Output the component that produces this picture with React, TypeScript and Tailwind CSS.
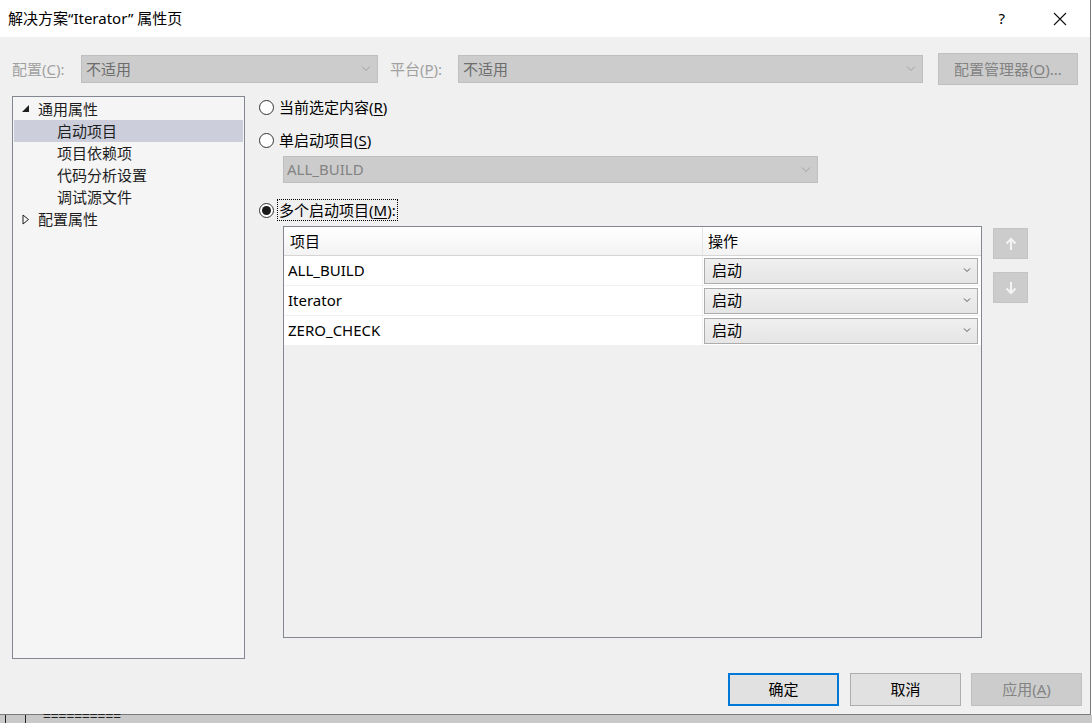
import React from "react";

const FONT = "font-['Segoe_UI','Noto_Sans','Noto_Sans_CJK_SC',sans-serif]";

function Chevron({ color = "#a0a0a0" }: { color?: string }) {
  return (
    <svg width="10" height="6" viewBox="0 0 10 6" fill="none" stroke={color} strokeWidth="1">
      <path d="M1 0.5l4 4 4-4" />
    </svg>
  );
}

function Radio({ checked, label, focus }: { checked?: boolean; label: React.ReactNode; focus?: boolean }) {
  return (
    <div className="flex items-center h-[22px]">
      <span className="w-[15px] h-[15px] rounded-full border border-[#333] bg-white flex items-center justify-center shrink-0">
        {checked && <span className="w-[9px] h-[9px] rounded-full bg-[#1a1a1a]" />}
      </span>
      <span
        className={`ml-[4px] text-[15px] text-black leading-[20px] px-[1px] ${focus ? "outline outline-1 outline-dotted outline-black" : ""}`}
      >
        {label}
      </span>
    </div>
  );
}

function U({ c }: { c: string }) {
  return <span className="underline underline-offset-2">{c}</span>;
}

const treeItems = [
  { text: "通用属性", level: 0, open: true },
  { text: "启动项目", level: 1, selected: true },
  { text: "项目依赖项", level: 1 },
  { text: "代码分析设置", level: 1 },
  { text: "调试源文件", level: 1 },
  { text: "配置属性", level: 0, open: false },
];

const projects = ["ALL_BUILD", "Iterator", "ZERO_CHECK"];

export default function App() {
  return (
    <div className={`w-[1092px] h-[723px] bg-white overflow-hidden flex flex-col ${FONT}`}>
      <div className="w-[1091px] h-[717px] bg-[#f0f0f0] border-r border-b border-[#7a7a7a] flex flex-col">
        {/* title bar */}
        <div className="h-[37px] bg-white flex items-center shrink-0">
          <span className="ml-[8px] text-[15px] text-black">解决方案“Iterator” 属性页</span>
          <span className="ml-auto mr-[48px] text-[15px] text-black">?</span>
          <svg className="mr-[23px]" width="14" height="14" viewBox="0 0 14 14" stroke="#111" strokeWidth="1.1">
            <path d="M1 1l12 12M13 1L1 13" />
          </svg>
        </div>

        {/* config row */}
        <div className="flex items-center h-[32px] mt-[16px] pl-[12px]">
          <span className="text-[15px] text-[#a0a0a0] w-[69px]">
            配置(<U c="C" />):
          </span>
          <div className="w-[297px] h-[28px] bg-[#cccccc] border border-[#bfbfbf] flex items-center pl-[4px] pr-[6px]">
            <span className="text-[15px] text-[#6d6d6d]">不适用</span>
            <span className="ml-auto"><Chevron /></span>
          </div>
          <span className="ml-[12px] text-[15px] text-[#a0a0a0] w-[68px]">
            平台(<U c="P" />):
          </span>
          <div className="w-[465px] h-[28px] bg-[#cccccc] border border-[#bfbfbf] flex items-center pl-[4px] pr-[6px]">
            <span className="text-[15px] text-[#6d6d6d]">不适用</span>
            <span className="ml-auto"><Chevron /></span>
          </div>
          <div className="ml-[15px] w-[140px] h-[32px] bg-[#cccccc] border border-[#bfbfbf] flex items-center justify-center">
            <span className="text-[15px] text-[#838383]">配置管理器(<U c="O" />)...</span>
          </div>
        </div>

        {/* main */}
        <div className="flex mt-[11px] pl-[12px]">
          {/* tree */}
          <div className="w-[233px] h-[563px] bg-[#f5f5f5] border border-[#828790] pt-[1px] px-[1px] shrink-0">
            {treeItems.map((it) => (
              <div
                key={it.text}
                className={`h-[22px] flex items-center ${it.selected ? "bg-[#cccedb]" : ""}`}
              >
                {it.level === 0 ? (
                  <>
                    <span className="w-[10px] ml-[8px] flex items-center">
                      {it.open ? (
                        <svg width="8" height="8" viewBox="0 0 8 8">
                          <polygon points="7,0 7,7 0,7" fill="#1e1e1e" />
                        </svg>
                      ) : (
                        <svg width="8" height="11" viewBox="0 0 8 11" fill="none" stroke="#1e1e1e">
                          <polygon points="1,1 6.5,5.5 1,10" />
                        </svg>
                      )}
                    </span>
                    <span className="ml-[6px] text-[15px] text-[#1e1e1e]">{it.text}</span>
                  </>
                ) : (
                  <span className="ml-[43px] text-[15px] text-[#1e1e1e]">{it.text}</span>
                )}
              </div>
            ))}
          </div>

          {/* right pane */}
          <div className="ml-[14px] flex flex-col">
            <Radio label={<>当前选定内容(<U c="R" />)</>} />
            <div className="h-[11px]" />
            <Radio label={<>单启动项目(<U c="S" />)</>} />
            <div className="ml-[24px] mt-[5px] w-[535px] h-[27px] bg-[#cccccc] border border-[#bfbfbf] flex items-center pl-[3px] pr-[6px]">
              <span className="text-[15px] text-[#838383]">ALL_BUILD</span>
              <span className="ml-auto"><Chevron /></span>
            </div>
            <div className="h-[16px]" />
            <Radio checked focus label={<>多个启动项目(<U c="M" />):</>} />

            <div className="flex mt-[5px]">
              {/* grid */}
              <div className="ml-[24px] w-[699px] h-[412px] border border-[#828790] bg-[#f0f0f0] flex flex-col">
                <div className="h-[29px] flex bg-gradient-to-b from-white to-[#f3f3f3] border-b border-[#d5d5d5]">
                  <div className="w-[419px] border-r border-[#e5e5e5] flex items-center pl-[6px]">
                    <span className="text-[15px] text-black">项目</span>
                  </div>
                  <div className="flex-1 flex items-center pl-[5px]">
                    <span className="text-[15px] text-black">操作</span>
                  </div>
                </div>
                {projects.map((p) => (
                  <div key={p} className="h-[30px] flex bg-white border-b border-[#f0f0f0]">
                    <div className="w-[419px] border-r border-[#f0f0f0] flex items-center pl-[4px]">
                      <span className="text-[15px] text-black">{p}</span>
                    </div>
                    <div className="flex-1 flex items-center pl-[1px] pr-[3px]">
                      <div className="w-full h-[26px] border border-[#acacac] bg-gradient-to-b from-[#f0f0f0] to-[#e5e5e5] flex items-center pl-[7px] pr-[6px]">
                        <span className="text-[15px] text-black">启动</span>
                        <span className="ml-auto">
                          <svg width="8" height="5" viewBox="0 0 8 5" fill="none" stroke="#555" strokeWidth="1">
                            <path d="M1 0.5l3 3 3-3" />
                          </svg>
                        </span>
                      </div>
                    </div>
                  </div>
                ))}
              </div>

              {/* up / down */}
              <div className="ml-[11px] mt-[2px] flex flex-col gap-[13px]">
                <div className="w-[35px] h-[31px] bg-[#cccccc] border border-[#c4c4c4] flex items-center justify-center">
                  <svg width="12" height="14" viewBox="0 0 12 14" fill="none" stroke="#f4f4f4" strokeWidth="2">
                    <path d="M6 13V2M1.5 6.5L6 2l4.5 4.5" />
                  </svg>
                </div>
                <div className="w-[35px] h-[31px] bg-[#cccccc] border border-[#c4c4c4] flex items-center justify-center">
                  <svg width="12" height="14" viewBox="0 0 12 14" fill="none" stroke="#f4f4f4" strokeWidth="2">
                    <path d="M6 1v11M1.5 7.5L6 12l4.5-4.5" />
                  </svg>
                </div>
              </div>
            </div>
          </div>
        </div>

        {/* buttons */}
        <div className="flex justify-end mt-[14px] pr-[8px]">
          <div className="w-[111px] h-[33px] border-2 border-[#0078d7] bg-[#e1e1e1] flex items-center justify-center">
            <span className="text-[15px] text-black">确定</span>
          </div>
          <div className="ml-[11px] w-[111px] h-[33px] border border-[#adadad] bg-[#e1e1e1] flex items-center justify-center">
            <span className="text-[15px] text-black">取消</span>
          </div>
          <div className="ml-[10px] w-[111px] h-[33px] border border-[#bfbfbf] bg-[#cccccc] flex items-center justify-center">
            <span className="text-[15px] text-[#838383]">应用(<U c="A" />)</span>
          </div>
        </div>
      </div>

      {/* strip of the window behind */}
      <div className="flex-1 bg-[#c9c9c9] flex items-start">
        <div className="ml-[5px] w-px h-full bg-[#222]" />
        <div className="ml-[19px] w-px h-full bg-[#222]" />
        <span className="ml-[17px] -mt-[5px] text-[13px] leading-[13px] text-[#222] font-['Liberation_Mono',monospace]">==========</span>
      </div>
    </div>
  );
}
